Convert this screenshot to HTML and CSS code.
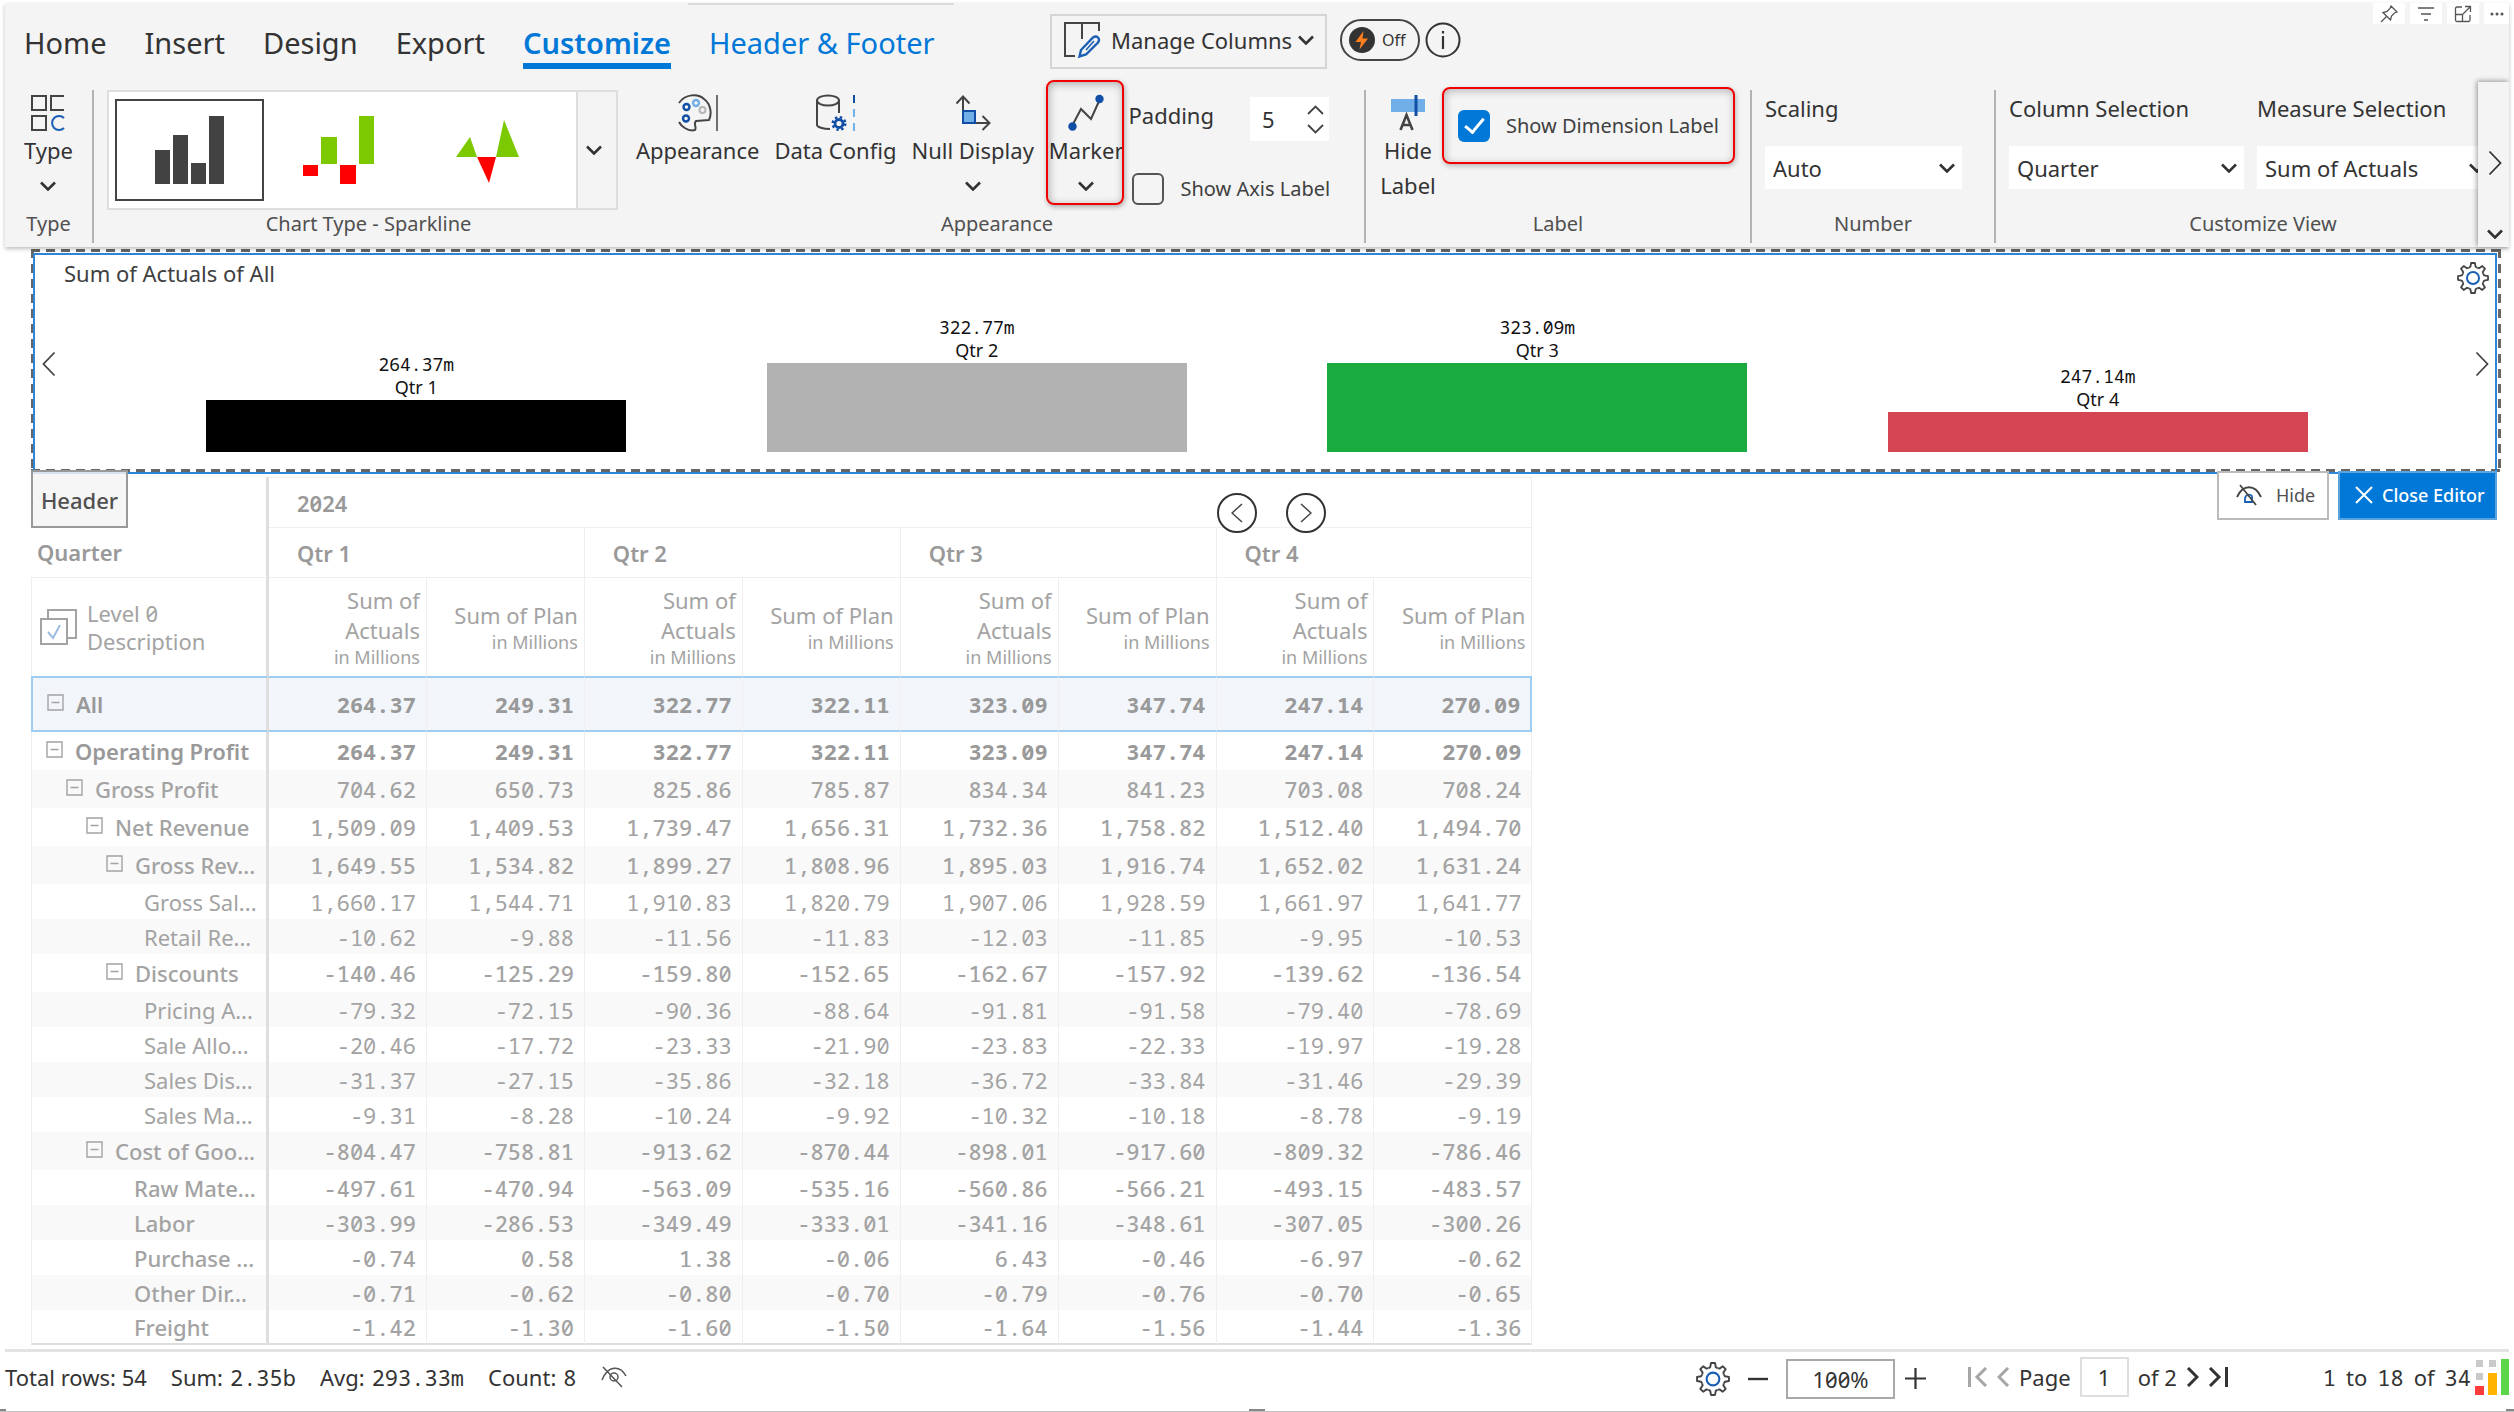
FILE: index.html
```html
<!DOCTYPE html>
<html lang="en">
<head>
<meta charset="utf-8">
<title>Matrix editor</title>
<link rel="stylesheet" href="styles.css">
</head>
<body>
<svg class="defs" aria-hidden="true">
  <symbol id="chev" viewBox="0 0 16 10"><path d="M1 1.500 8 8.500 15 1.500" fill="none" stroke="currentColor" stroke-width="2.600"/></symbol>
  <symbol id="thin-right" viewBox="0 0 14 26"><path d="M1.500 1.500 12.500 13 1.500 24.500" fill="none" stroke="currentColor" stroke-width="1.800"/></symbol>
  <symbol id="thin-left" viewBox="0 0 14 26"><path d="M12.500 1.500 1.500 13 12.500 24.500" fill="none" stroke="currentColor" stroke-width="1.800"/></symbol>
  <symbol id="gear" viewBox="-16 -16 32 32">
    <g fill="none" stroke="#444" stroke-width="1.800" stroke-linejoin="round">
      <path id="tooth" d="M-4.200-10.200-2.600-11.200-1.900-15H1.900L2.600-11.200 4.200-10.200"/>
      <use href="#tooth" transform="rotate(45)"/><use href="#tooth" transform="rotate(90)"/><use href="#tooth" transform="rotate(135)"/>
      <use href="#tooth" transform="rotate(180)"/><use href="#tooth" transform="rotate(225)"/><use href="#tooth" transform="rotate(270)"/><use href="#tooth" transform="rotate(315)"/>
    </g>
    <circle r="6" fill="none" stroke="#1b5fb4" stroke-width="2"/>
  </symbol>
  <symbol id="minus-box" viewBox="0 0 17 17"><path d="M1 1H16V16H1ZM4.500 8.500H12.500" fill="none" stroke="#a3a3a3" stroke-width="1.400"/></symbol>
</svg>

<div class="page">
  <header class="ribbon">
    <div class="topbar">
      <nav class="tabs">
        <a href="#home">Home</a>
        <a href="#insert">Insert</a>
        <a href="#design">Design</a>
        <a href="#export">Export</a>
        <a href="#customize" class="active">Customize</a>
        <a href="#headerfooter" class="context">Header &amp; Footer</a>
      </nav>
      <button class="manage">
        <svg width="38" height="38" viewBox="0 0 38 38" fill="none"><path d="M12 35H2V2H36V10M19 2V18" stroke="#444" stroke-width="2"/><path d="M18 29 30 16.500Q33 14.500 35 16.500T35 21.500L23 33.500 16.500 35.500Z" stroke="#1b5fb4" stroke-width="2.400"/><path d="M23 29 31 20" stroke="#1b5fb4" stroke-width="1.600"/></svg>
        Manage Columns
        <svg class="chev"><use href="#chev"/></svg>
      </button>
      <button class="toggle">
        <svg width="26" height="26" viewBox="0 0 26 26"><circle cx="13" cy="13" r="13" fill="#333"/><path d="M14.500 4 6.500 15H12L10.500 22.500 19 11.500H13.500Z" fill="#ff7f1f"/></svg>
        Off
      </button>
      <button class="info" aria-label="Information"><svg width="36" height="36" viewBox="0 0 36 36"><circle cx="18" cy="18" r="16.500" fill="none" stroke="#333" stroke-width="2"/><path d="M18 14V27M18 9V11.500" stroke="#333" stroke-width="2.200"/></svg></button>
      <div class="tools">
        <button aria-label="Pin"><svg width="18" height="18" viewBox="0 0 18 18"><path d="M11 1 17 7 14.500 8 11.500 11 10.500 15 3 7.500 7 6.500 10 3.500ZM6.500 11.500 1 17" fill="none" stroke="#555" stroke-width="1.300"/></svg></button>
        <button aria-label="Filter"><svg width="18" height="18" viewBox="0 0 18 18"><path d="M1 3H17M4 9H14M7 15H11" stroke="#555" stroke-width="1.500"/></svg></button>
        <button aria-label="Focus mode"><svg width="18" height="18" viewBox="0 0 18 18"><path d="M8 2H3Q1.500 2 1.500 3.500V15Q1.500 16.500 3 16.500H14.500Q16 16.500 16 15V10M11 1.500H16.500V7M16 2 9 9M2 9.500H8.500V16" fill="none" stroke="#555" stroke-width="1.300"/></svg></button>
        <button aria-label="More"><svg width="18" height="18" viewBox="0 0 18 18"><circle cx="4" cy="9" r="1.500" fill="#555"/><circle cx="9" cy="9" r="1.500" fill="#555"/><circle cx="14" cy="9" r="1.500" fill="#555"/></svg></button>
      </div>
    </div>

    <div class="groups">
      <section class="group type-group">
        <div class="controls">
          <button class="big">
            <svg width="34" height="38" viewBox="0 0 34 38" fill="none" stroke="#444" stroke-width="2"><path d="M1 2H15V16H1ZM33 2H20V16H33M1 22H15V36H1Z"/><path d="M33 24A7 7 0 1 0 33 34" stroke="#1b5fb4"/></svg>
            <span>Type</span>
            <svg class="chev"><use href="#chev"/></svg>
          </button>
        </div>
        <h2>Type</h2>
      </section>

      <section class="group chart-group">
        <div class="controls">
          <div class="gallery">
            <button class="thumb selected" aria-label="Column sparkline"><svg width="70" height="70" viewBox="0 0 70 70" fill="#424242"><path d="M0 35H15V69H0ZM18 20H33V69H18ZM36 48H51V69H36ZM54 1H69V69H54Z"/></svg></button>
            <button class="thumb" aria-label="Win loss sparkline"><svg width="71" height="70" viewBox="0 0 71 70"><path d="M0 50H15V61H0ZM37 50H53V69H37Z" fill="#fe0000"/><path d="M18 22H34V49H18ZM56 1H71V49H56Z" fill="#7dc900"/></svg></button>
            <button class="thumb" aria-label="Area sparkline"><svg width="64" height="70" viewBox="0 0 64 70"><path d="M0 42 14 22 21 42ZM40 42 48 5 63 42Z" fill="#7dc900"/><path d="M21 42H40L33 68Z" fill="#fe0000"/></svg></button>
            <button class="expand" aria-label="More chart types"><svg class="chev"><use href="#chev"/></svg></button>
          </div>
        </div>
        <h2>Chart Type - Sparkline</h2>
      </section>

      <section class="group appearance-group">
        <div class="controls">
          <button class="big">
            <svg width="40" height="38" viewBox="0 0 40 38" fill="none"><path d="M1 9C7 0 20-1 26 5 33 10 34 20 31 26L18 27C15 30 19 33 17 36 10 38 3 32 1 28" stroke="#444" stroke-width="2" stroke-linejoin="round"/><circle cx="8.500" cy="13" r="3" stroke="#104fa5" stroke-width="2.400"/><circle cx="18" cy="9" r="3" stroke="#71afe8" stroke-width="2.400"/><circle cx="24.500" cy="16" r="3" stroke="#b5b5b5" stroke-width="2"/><circle cx="8" cy="24.500" r="3" stroke="#104fa5" stroke-width="2.400"/><path d="M39 1V37" stroke="#444" stroke-width="1.500"/></svg>
            <span>Appearance</span>
          </button>
          <button class="big">
            <svg width="40" height="38" viewBox="0 0 40 38" fill="none"><path d="M24 6V19M2 6V31C2 33 8 35 15 35" stroke="#444" stroke-width="2"/><ellipse cx="13" cy="6.500" rx="11" ry="5" stroke="#444" stroke-width="2"/><circle cx="24" cy="29.500" r="4" stroke="#104fa5" stroke-width="2.800"/><circle cx="24" cy="29.500" r="6.300" stroke="#104fa5" stroke-width="2.400" stroke-dasharray="2.475 2.475"/><path d="M39 1V9" stroke="#104fa5" stroke-width="2"/><path d="M39 15V23M39 29V37" stroke="#71afe8" stroke-width="2"/></svg>
            <span>Data Config</span>
          </button>
          <button class="big">
            <svg width="36" height="38" viewBox="0 0 36 38"><path d="M8 17V3M1.500 9.500 8 2.500 14.500 9.500M20 29H34M27.500 22 34.500 29 27.500 36" fill="none" stroke="#444" stroke-width="2"/><path d="M8 17H20V29H8Z" fill="#71afe8" stroke="#104fa5" stroke-width="2"/></svg>
            <span>Null Display</span>
            <svg class="chev"><use href="#chev"/></svg>
          </button>
          <button class="big callout">
            <svg width="36" height="38" viewBox="0 0 36 38"><path d="M4 32 13 15 23 25 32 5" fill="none" stroke="#444" stroke-width="2"/><circle cx="4.500" cy="32.500" r="4.200" fill="#104fa5"/><circle cx="31.500" cy="5" r="4.200" fill="#104fa5"/></svg>
            <span>Marker</span>
            <svg class="chev"><use href="#chev"/></svg>
          </button>
          <div class="options">
            <div class="padding-row">
              <label for="padding">Padding</label>
              <div class="spinner">
                <input id="padding" type="text" value="5">
                <div class="steps">
                  <button aria-label="Increase"><svg width="17" height="10" viewBox="0 0 17 10"><path d="M1 9 8.500 1.500 16 9" fill="none" stroke="#444" stroke-width="1.800"/></svg></button>
                  <button aria-label="Decrease"><svg width="17" height="10" viewBox="0 0 17 10"><path d="M1 1 8.500 8.500 16 1" fill="none" stroke="#444" stroke-width="1.800"/></svg></button>
                </div>
              </div>
            </div>
            <label class="check"><input type="checkbox"> Show Axis Label</label>
          </div>
        </div>
        <h2>Appearance</h2>
      </section>

      <section class="group label-group">
        <div class="controls">
          <button class="big narrow">
            <svg width="34" height="38" viewBox="0 0 34 38"><path d="M0 5H34V18H0Z" fill="#71afe8"/><path d="M25 1V22" stroke="#104fa5" stroke-width="3"/><path d="M9.500 36 15.500 21 21.500 36M11.500 31H19.500" fill="none" stroke="#444" stroke-width="2.600"/></svg>
            <span>Hide Label</span>
          </button>
          <label class="check boxed"><input type="checkbox" checked> Show Dimension Label</label>
        </div>
        <h2>Label</h2>
      </section>

      <section class="group number-group">
        <div class="controls">
          <div class="field">
            <label for="scaling">Scaling</label>
            <div class="select"><select id="scaling"><option>Auto</option></select><svg class="chev"><use href="#chev"/></svg></div>
          </div>
        </div>
        <h2>Number</h2>
      </section>

      <section class="group view-group">
        <div class="controls">
          <div class="field wide">
            <label for="column">Column Selection</label>
            <div class="select"><select id="column"><option>Quarter</option></select><svg class="chev"><use href="#chev"/></svg></div>
          </div>
          <div class="field wide">
            <label for="measure">Measure Selection</label>
            <div class="select"><select id="measure"><option>Sum of Actuals</option></select><svg class="chev"><use href="#chev"/></svg></div>
          </div>
        </div>
        <h2>Customize View</h2>
      </section>
    </div>

    <div class="scroller">
      <button aria-label="Scroll ribbon"><svg width="14" height="26"><use href="#thin-right"/></svg></button>
      <button aria-label="Collapse ribbon"><svg class="chev"><use href="#chev"/></svg></button>
    </div>
  </header>

  <main>
    <section class="editor">
      <div class="canvas">
        <div class="canvas-head">
          <h3>Sum of Actuals of All</h3>
          <button aria-label="Chart settings"><svg width="32" height="32"><use href="#gear"/></svg></button>
        </div>
        <div class="chart">
          <button aria-label="Previous"><svg width="14" height="26"><use href="#thin-left"/></svg></button>
          <div class="bars">
            <div class="bar"><span class="num">264.37m</span><span>Qtr 1</span><i class="black" style="height:52px"></i></div>
            <div class="bar"><span class="num">322.77m</span><span>Qtr 2</span><i class="gray" style="height:89px"></i></div>
            <div class="bar"><span class="num">323.09m</span><span>Qtr 3</span><i class="green" style="height:89px"></i></div>
            <div class="bar"><span class="num">247.14m</span><span>Qtr 4</span><i class="red" style="height:40px"></i></div>
          </div>
          <button aria-label="Next"><svg width="14" height="26"><use href="#thin-right"/></svg></button>
        </div>
      </div>
      <div class="tag">Header</div>
      <div class="actions">
        <button class="hide"><svg width="26" height="22" viewBox="0 0 26 22" fill="none"><path d="M1 13C7 0 19 0 25 13" stroke="#444" stroke-width="1.800"/><path d="M9 18V14A4 4 0 0 1 16 12V18Z" stroke="#1b5fb4" stroke-width="1.800"/><path d="M4 1 20 21" stroke="#444" stroke-width="1.800"/></svg>Hide</button>
        <button class="close"><svg width="20" height="20" viewBox="0 0 20 20"><path d="M2 2 18 18M18 2 2 18" stroke="#fff" stroke-width="2"/></svg>Close Editor</button>
      </div>
    </section>

    <div class="matrix-wrap">
      <table class="matrix">
        <colgroup><col class="first"><col><col><col><col><col><col><col><col></colgroup>
        <thead>
          <tr class="h1"><th class="ghost">Year</th><th colspan="8">2024</th></tr>
          <tr class="h2"><th>Quarter</th><th colspan="2">Qtr 1</th><th colspan="2">Qtr 2</th><th colspan="2">Qtr 3</th><th colspan="2">Qtr 4</th></tr>
          <tr class="h3">
            <th><div class="level"><svg width="37" height="36" viewBox="0 0 37 36" fill="none" stroke="#a3a3a3" stroke-width="2"><path d="M8 10V1H36V29H27M1 10H27V35H1Z"/><path d="M8 23 13 29 20 16" stroke="#9dbde2"/></svg><span>Level 0 Description</span></div></th>
            <th>Sum of Actuals<small>in Millions</small></th><th>Sum of Plan<small>in Millions</small></th>
            <th>Sum of Actuals<small>in Millions</small></th><th>Sum of Plan<small>in Millions</small></th>
            <th>Sum of Actuals<small>in Millions</small></th><th>Sum of Plan<small>in Millions</small></th>
            <th>Sum of Actuals<small>in Millions</small></th><th>Sum of Plan<small>in Millions</small></th>
          </tr>
        </thead>
        <tbody>
          <tr class="all total"><th class="l0"><svg class="mb"><use href="#minus-box"/></svg>All</th><td>264.37</td><td>249.31</td><td>322.77</td><td>322.11</td><td>323.09</td><td>347.74</td><td>247.14</td><td>270.09</td></tr>
          <tr class="total"><th class="l0"><svg class="mb"><use href="#minus-box"/></svg>Operating Profit</th><td>264.37</td><td>249.31</td><td>322.77</td><td>322.11</td><td>323.09</td><td>347.74</td><td>247.14</td><td>270.09</td></tr>
          <tr class="sub"><th class="l1"><svg class="mb"><use href="#minus-box"/></svg>Gross Profit</th><td>704.62</td><td>650.73</td><td>825.86</td><td>785.87</td><td>834.34</td><td>841.23</td><td>703.08</td><td>708.24</td></tr>
          <tr class="sub"><th class="l2"><svg class="mb"><use href="#minus-box"/></svg>Net Revenue</th><td>1,509.09</td><td>1,409.53</td><td>1,739.47</td><td>1,656.31</td><td>1,732.36</td><td>1,758.82</td><td>1,512.40</td><td>1,494.70</td></tr>
          <tr class="sub"><th class="l3"><svg class="mb"><use href="#minus-box"/></svg>Gross Rev...</th><td>1,649.55</td><td>1,534.82</td><td>1,899.27</td><td>1,808.96</td><td>1,895.03</td><td>1,916.74</td><td>1,652.02</td><td>1,631.24</td></tr>
          <tr><th class="leaf">Gross Sal...</th><td>1,660.17</td><td>1,544.71</td><td>1,910.83</td><td>1,820.79</td><td>1,907.06</td><td>1,928.59</td><td>1,661.97</td><td>1,641.77</td></tr>
          <tr><th class="leaf">Retail Re...</th><td>-10.62</td><td>-9.88</td><td>-11.56</td><td>-11.83</td><td>-12.03</td><td>-11.85</td><td>-9.95</td><td>-10.53</td></tr>
          <tr class="sub"><th class="l3"><svg class="mb"><use href="#minus-box"/></svg>Discounts</th><td>-140.46</td><td>-125.29</td><td>-159.80</td><td>-152.65</td><td>-162.67</td><td>-157.92</td><td>-139.62</td><td>-136.54</td></tr>
          <tr><th class="leaf">Pricing A...</th><td>-79.32</td><td>-72.15</td><td>-90.36</td><td>-88.64</td><td>-91.81</td><td>-91.58</td><td>-79.40</td><td>-78.69</td></tr>
          <tr><th class="leaf">Sale Allo...</th><td>-20.46</td><td>-17.72</td><td>-23.33</td><td>-21.90</td><td>-23.83</td><td>-22.33</td><td>-19.97</td><td>-19.28</td></tr>
          <tr><th class="leaf">Sales Dis...</th><td>-31.37</td><td>-27.15</td><td>-35.86</td><td>-32.18</td><td>-36.72</td><td>-33.84</td><td>-31.46</td><td>-29.39</td></tr>
          <tr><th class="leaf">Sales Ma...</th><td>-9.31</td><td>-8.28</td><td>-10.24</td><td>-9.92</td><td>-10.32</td><td>-10.18</td><td>-8.78</td><td>-9.19</td></tr>
          <tr class="sub"><th class="l2"><svg class="mb"><use href="#minus-box"/></svg>Cost of Goo...</th><td>-804.47</td><td>-758.81</td><td>-913.62</td><td>-870.44</td><td>-898.01</td><td>-917.60</td><td>-809.32</td><td>-786.46</td></tr>
          <tr class="item"><th>Raw Mate...</th><td>-497.61</td><td>-470.94</td><td>-563.09</td><td>-535.16</td><td>-560.86</td><td>-566.21</td><td>-493.15</td><td>-483.57</td></tr>
          <tr class="item"><th>Labor</th><td>-303.99</td><td>-286.53</td><td>-349.49</td><td>-333.01</td><td>-341.16</td><td>-348.61</td><td>-307.05</td><td>-300.26</td></tr>
          <tr class="item"><th>Purchase ...</th><td>-0.74</td><td>0.58</td><td>1.38</td><td>-0.06</td><td>6.43</td><td>-0.46</td><td>-6.97</td><td>-0.62</td></tr>
          <tr class="item"><th>Other Dir...</th><td>-0.71</td><td>-0.62</td><td>-0.80</td><td>-0.70</td><td>-0.79</td><td>-0.76</td><td>-0.70</td><td>-0.65</td></tr>
          <tr class="item"><th>Freight</th><td>-1.42</td><td>-1.30</td><td>-1.60</td><td>-1.50</td><td>-1.64</td><td>-1.56</td><td>-1.44</td><td>-1.36</td></tr>
        </tbody>
      </table>
      <div class="pan">
        <button aria-label="Pan left"><svg width="12" height="20" viewBox="0 0 12 20"><path d="M11 1 1 10 11 19" fill="none" stroke="#444" stroke-width="1.500"/></svg></button>
        <button aria-label="Pan right"><svg width="12" height="20" viewBox="0 0 12 20"><path d="M1 1 11 10 1 19" fill="none" stroke="#444" stroke-width="1.500"/></svg></button>
      </div>
    </div>
  </main>

  <footer class="status">
    <div class="stats">
      <span>Total rows: 54</span>
      <span class="pair">Sum: <b>2.35b</b></span>
      <span class="pair">Avg: <b>293.33m</b></span>
      <span class="pair">Count: <b>8</b></span>
      <button aria-label="Hide summary"><svg width="26" height="22" viewBox="0 0 26 22" fill="none" stroke="#555" stroke-width="1.500"><path d="M1 14C7-1 19-1 25 10M2 1 21 21"/><circle cx="13" cy="11" r="4"/></svg></button>
    </div>
    <div class="zoom">
      <button aria-label="Settings"><svg width="34" height="34"><use href="#gear"/></svg></button>
      <button aria-label="Zoom out"><svg width="20" height="20" viewBox="0 0 20 20"><path d="M0 10H20" stroke="#333" stroke-width="2.400"/></svg></button>
      <input class="zoom-value" type="text" value="100%" aria-label="Zoom level">
      <button aria-label="Zoom in"><svg width="21" height="21" viewBox="0 0 21 21"><path d="M0 10.500H21M10.500 0V21" stroke="#333" stroke-width="2.200"/></svg></button>
    </div>
    <div class="pager">
      <button class="off" aria-label="First page"><svg width="20" height="20" viewBox="0 0 20 20"><path d="M1.500 0V20M18 1 9 10 18 19" fill="none" stroke="currentColor" stroke-width="3"/></svg></button>
      <button class="off" aria-label="Previous page"><svg width="13" height="20" viewBox="0 0 13 20"><path d="M11 1 2 10 11 19" fill="none" stroke="currentColor" stroke-width="3"/></svg></button>
      <label for="pageno">Page</label>
      <input id="pageno" type="text" value="1">
      <span>of 2</span>
      <button aria-label="Next page"><svg width="13" height="20" viewBox="0 0 13 20"><path d="M2 1 11 10 2 19" fill="none" stroke="currentColor" stroke-width="3"/></svg></button>
      <button aria-label="Last page"><svg width="20" height="20" viewBox="0 0 20 20"><path d="M18.500 0V20M2 1 11 10 2 19" fill="none" stroke="currentColor" stroke-width="3"/></svg></button>
    </div>
    <div class="range"><b>1</b><span>to</span><b>18</b><span>of</span><b>34</b></div>
    <svg class="logo" width="34" height="36" viewBox="0 0 34 36"><path d="M1 1H8V8H1ZM14 1H21V8H14ZM1 14H8V21H1Z" fill="#c9c9c9"/><path d="M0 27H9V36H0Z" fill="#ff3b3b"/><path d="M13 14H22V36H13Z" fill="#ffb400"/><path d="M26 0H34V36H26Z" fill="#5ed64c"/></svg>
  </footer>
</div>
</body>
</html>
```
FILE: styles.css
```css
* { box-sizing: border-box; }
body {
  margin: 0;
  background: #fff;
  color: #333;
  font: 22px/30px "Noto Sans", sans-serif;
  font-feature-settings: "zero";
}
button, input, select {
  margin: 0;
  padding: 0;
  border: 0;
  border-radius: 0;
  background: none;
  color: inherit;
  font: inherit;
  font-feature-settings: inherit;
}
button svg { display: block; flex: none; }
h2, h3 { margin: 0; font-size: 22px; font-weight: 400; }
.defs { position: absolute; width: 0; height: 0; }
.chev { width: 16px; height: 10px; display: block; flex: none; }

.page {
  display: flex;
  flex-direction: column;
  min-height: 100vh;
  padding: 3px 5px 0;
  border-bottom: 1px solid #c0c0c0;
  background:
    linear-gradient(#888, #888) left bottom / 6px 2px no-repeat,
    linear-gradient(#888, #888) center bottom / 16px 2px no-repeat,
    linear-gradient(#888, #888) right bottom / 8px 2px no-repeat;
}

/* ribbon */
.ribbon {
  position: relative;
  z-index: 2;
  overflow-x: clip;
  background: #f4f4f4;
  box-shadow: 0 2px 4px rgba(0, 0, 0, .25);
}
.topbar {
  display: flex;
  align-items: flex-start;
  height: 87px;
  background: linear-gradient(#dcdcdc, #dcdcdc) 683px 0 / 266px 2px no-repeat;
}
.tabs { display: flex; align-items: flex-start; gap: 38px; padding: 20px 0 0 19px; width: 1045px; }
.tabs a {
  color: #333;
  text-decoration: none;
  font-size: 29px;
  line-height: 40px;
  white-space: nowrap;
}
.tabs .active { color: #0078d7; font-weight: 600; border-bottom: 6px solid #0078d7; }
.tabs .context { color: #0078d7; }
.manage {
  display: flex;
  align-items: center;
  gap: 10px;
  height: 55px;
  margin-top: 11px;
  padding: 0 11px 4px;
  border: 2px solid #d5d5d5;
  white-space: nowrap;
}
.manage .chev { margin-left: -4px; }
.toggle {
  display: flex;
  align-items: center;
  gap: 7px;
  width: 80px;
  height: 42px;
  margin: 16px 5px 0 13px;
  padding-left: 7px;
  border: 2px solid #444;
  border-radius: 21px;
  font-size: 16px;
}
.info { margin-top: 19px; }
.tools { display: flex; gap: 5px; margin-left: auto; }
.tools button { display: grid; place-items: center; width: 32px; height: 21px; background: #fff; }
.tools button:last-child { width: 25px; }

.groups { display: flex; height: 157px; }
.group {
  display: flex;
  flex: none;
  flex-direction: column;
  height: 153px;
  border-right: 2px solid #b3b3b3;
}
.controls { display: flex; height: 120px; }
.group h2 { font-size: 20px; line-height: 28px; text-align: center; color: #505050; }
.type-group { width: 89px; }
.chart-group { width: 536px; padding-left: 13px; border: 0; }
.appearance-group { width: 736px; }
.label-group { width: 386px; }
.number-group { width: 244px; }
.view-group { width: 534px; border: 0; }

.big { display: flex; flex-direction: column; align-items: center; white-space: nowrap; }
.big > svg:first-child { margin: 4px 0 1px; }
.big span { line-height: 35px; }
.big .chev { margin-top: 13px; }
.type-group .big { margin: 0 auto; }
.appearance-group .controls { gap: 15px; padding-left: 6px; }
.narrow { width: 60px; margin: 0 4px 0 12px; white-space: normal; }
.callout { position: relative; }
.callout::after {
  content: "";
  position: absolute;
  inset: -10px -1px 5px -3px;
  border: 2px solid #f00000;
  border-radius: 8px;
  box-shadow: 1px 2px 5px rgba(0, 0, 0, .3), inset 1px 2px 8px rgba(0, 0, 0, .3);
}

.gallery {
  display: flex;
  width: 511px;
  height: 120px;
  padding: 4px 0 4px 6px;
  border: 2px solid #dedede;
  background: linear-gradient(90deg, #fff 467px, #dedede 467px, #dedede 469px, #f4f4f4 469px);
}
.thumb { display: grid; align-self: center; place-items: center; width: 149px; height: 102px; background: #fff; }
.thumb.selected { border: 2px solid #444; }
.expand { display: grid; place-items: center; flex: 1; padding-left: 10px; }

.options { padding-top: 7px; margin-left: -10px; }
.padding-row { display: flex; align-items: flex-start; gap: 36px; height: 75px; }
.padding-row label { line-height: 36px; }
.spinner { display: flex; justify-content: space-between; width: 79px; height: 44px; padding: 0 5px 0 12px; background: #fff; }
.spinner input { width: 30px; }
.steps { display: flex; flex-direction: column; justify-content: center; gap: 9px; }
.check { display: flex; align-items: center; gap: 16px; height: 34px; font-size: 20px; white-space: nowrap; color: #404040; }
.check input {
  appearance: none;
  display: grid;
  place-items: center;
  width: 32px;
  height: 32px;
  border: 2px solid #555;
  border-radius: 6px;
}
.check input:checked { border-color: #0078d7; background: #0078d7; }
.check input:checked::after {
  content: "";
  width: 8px;
  height: 16px;
  margin-bottom: 5px;
  border: solid #fff;
  border-width: 0 3px 3px 0;
  transform: rotate(40deg);
}
.options .check { padding-left: 4px; }
.boxed {
  height: 77px;
  margin-top: -3px;
  padding: 0 14px;
  border: 2px solid #f00000;
  border-radius: 8px;
  box-shadow: 1px 2px 5px rgba(0, 0, 0, .25), inset 1px 2px 8px rgba(0, 0, 0, .25);
}

.field { display: flex; flex-direction: column; gap: 23px; width: 197px; padding-top: 3px; }
.field.wide { width: 235px; }
.number-group .controls { padding-left: 13px; }
.view-group .controls { gap: 13px; padding-left: 13px; }
.select { display: grid; align-items: center; height: 43px; background: #fff; }
.select select { grid-area: 1 / 1; height: 43px; padding: 0 30px 0 8px; appearance: none; }
.select .chev { grid-area: 1 / 1; justify-self: end; margin-right: 7px; pointer-events: none; }

.scroller {
  position: absolute;
  top: 79px;
  right: 0;
  bottom: 0;
  display: flex;
  flex-direction: column;
  align-items: center;
  justify-content: space-between;
  width: 31px;
  padding: 68px 0 8px 2px;
  background: #f4f4f4;
  box-shadow: -1px -1px 5px rgba(0, 0, 0, .4);
}

/* header chart editor */
main { flex: 1; }
.editor {
  position: relative;
  margin: 2px 8px 0 26px;
  padding: 4px 4px 0 2px;
  background:
    repeating-linear-gradient(90deg, #666 0 9px, transparent 9px 15px) top / 100% 3px no-repeat,
    repeating-linear-gradient(90deg, #666 0 9px, transparent 9px 15px) 0 calc(100% - 2px) / 100% 3px no-repeat,
    repeating-linear-gradient(#666 0 9px, transparent 9px 15px) left / 3px 100% no-repeat,
    repeating-linear-gradient(#666 0 9px, transparent 9px 15px) right / 3px 100% no-repeat;
}
.canvas { border: 2px solid #2f86d8; height: 221px; }
.canvas-head { display: flex; justify-content: space-between; padding: 3px 6px 0 29px; height: 42px; color: #404040; }
.chart { display: flex; padding: 0 6px 0 7px; color: #444; }
.chart button { height: 26px; margin-top: 54px; }
.bars { display: flex; flex: 1; align-items: flex-end; height: 155px; margin: 0 97px 0 80px; color: #111; }
.bar { display: flex; flex: 1; flex-direction: column; align-items: center; font-size: 18px; line-height: 23px; }
.bar i { width: 75%; }
.bar span:nth-child(2) { padding-bottom: 1px; }
.num, .matrix td, .status b { font-family: "Noto Sans Mono", "DejaVu Sans Mono", monospace; }
.black { background: #000; }
.gray { background: #b2b2b2; }
.green { background: #1aab40; }
.red { background: #d64554; }
.tag {
  position: absolute;
  left: 0;
  bottom: -54px;
  z-index: 1;
  width: 97px;
  height: 58px;
  border: 2px solid #999;
  background: rgba(245, 245, 245, .85);
  line-height: 56px;
  text-align: center;
  font-weight: 500;
  color: #505050;
}
.actions { position: absolute; right: 4px; bottom: -46px; z-index: 1; display: flex; gap: 9px; font-size: 18px; }
.actions button { display: flex; align-items: center; height: 49px; padding-bottom: 2px; }
.hide { gap: 14px; width: 112px; padding-left: 17px; border: 2px solid #bbb; background: #fff; color: #505050; }
.close { gap: 8px; width: 159px; padding-left: 14px; border: 2px solid #5aa3dd; background: #0078d7; color: #fff; font-weight: 500; white-space: nowrap; }

/* matrix */
.matrix-wrap { position: relative; width: 61%; padding: 3px 0 0 26px; }
.matrix { width: 100%; table-layout: fixed; border-collapse: separate; border-spacing: 0; color: #a3a3a3; }
.first { width: 238px; }
.matrix th, .matrix td { padding: 0; border-right: 1px solid #efefef; text-align: left; font-weight: 400; }
.matrix tr > :first-child { border-left: 1px solid #efefef; border-right: 3px solid #dedede; }
.matrix thead th { border-top: 1px solid #efefef; }
.h1 { height: 50px; }
.h2 { height: 50px; }
.matrix .h1 th, .matrix .h2 th { padding-left: 28px; font-weight: 600; color: #999; }
.matrix .h1 th:first-child, .matrix .h2 th:first-child { padding-left: 6px; border-left: 0; border-top: 0; }
.matrix .h1 .ghost { color: #e4e4e4; font-weight: 400; }
.h3 { height: 99px; }
.matrix .h3 th { padding-right: 6px; text-align: right; }
.matrix .h3 th:nth-child(even) { padding-left: 40px; }
.matrix small { display: block; font-size: 18px; line-height: 24px; }
.level { display: flex; align-items: center; gap: 10px; padding-left: 8px; text-align: left; line-height: 28px; }
.level span { width: 130px; }
.matrix tbody tr { height: 35px; }
.matrix tbody .total, .matrix tbody .sub { height: 38px; }
.matrix tbody tr:nth-child(odd) { background: #f9f9f9; }
.matrix .total th, .matrix .total td { font-weight: 600; color: #999; }
.matrix .total td { font-weight: 700; }
.matrix .sub th, .matrix .sub td, .matrix .item th, .matrix .item td { font-weight: 500; }
.matrix td { padding-right: 10px; text-align: right; line-height: 30px; }
.matrix tbody tr.all { height: 56px; background: #f2f6fa; }
.matrix .all > * { border-top: 2px solid #9fcdf0; border-bottom: 2px solid #9fcdf0; }
.matrix .all > :first-child { border-left: 2px solid #9fcdf0; }
.matrix .all > :last-child { border-right: 2px solid #9fcdf0; }
.matrix tbody tr:last-child > * { border-bottom: 2px solid #dedede; }
.mb { width: 17px; height: 17px; margin-right: 12px; vertical-align: 2px; }
.matrix .l0 { padding-left: 14px; }
.matrix .l1 { padding-left: 34px; }
.matrix .l2 { padding-left: 54px; }
.matrix .l3 { padding-left: 74px; }
.matrix .item th { padding-left: 102px; }
.matrix .leaf { padding-left: 112px; }
.pan { position: absolute; left: 1212px; top: 19px; display: flex; gap: 29px; }
.pan button { display: grid; place-items: center; width: 40px; height: 40px; border: 2px solid #333; border-radius: 50%; background: #fff; }

/* status bar */
.status {
  display: flex;
  align-items: center;
  height: 62px;
  padding-bottom: 10px;
  border-top: 3px solid #e3e3e3;
  white-space: nowrap;
}
.status b { font-weight: 400; }
.stats { display: flex; align-items: center; gap: 24px; margin-right: auto; }
.pair { display: flex; gap: 7px; }
.zoom { display: flex; align-items: center; gap: 18px; margin-right: 42px; padding-top: 4px; }
.zoom button:nth-child(4) { margin-left: -8px; }
.zoom-value { width: 109px; height: 40px; border: 2px solid #a9a9a9; text-align: center; }
.pager { display: flex; align-items: center; gap: 9px; margin-right: 95px; }
.pager .off { color: #a6a6a6; }
.pager input { width: 49px; height: 40px; border: 2px solid #dedede; text-align: center; }
.range { display: flex; gap: 10px; margin-right: 4px; }
```
